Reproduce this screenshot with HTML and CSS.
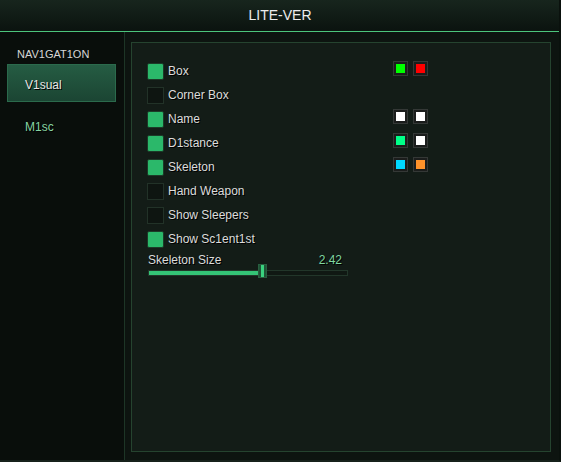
FILE: index.html
```html
<!DOCTYPE html>
<html>
<head>
<meta charset="utf-8">
<link rel="stylesheet" href="styles.css">
</head>
<body>
<div class="window">
  <div class="titlebar">LITE-VER</div>
  <div class="body">
    <aside class="sidebar">
      <div class="nav-title">NAV1GAT1ON</div>
      <div class="nav-item active">V1sual</div>
      <div class="nav-item">M1sc</div>
    </aside>
    <main class="main">
      <section class="panel">
        <div class="row">
          <span class="check on"></span><span class="label">Box</span>
          <span class="swatch"><i style="background:#00ff00"></i></span>
          <span class="swatch"><i style="background:#ff0000"></i></span>
        </div>
        <div class="row">
          <span class="check"></span><span class="label">Corner Box</span>
        </div>
        <div class="row">
          <span class="check on"></span><span class="label">Name</span>
          <span class="swatch"><i style="background:#ffffff"></i></span>
          <span class="swatch"><i style="background:#ffffff"></i></span>
        </div>
        <div class="row">
          <span class="check on"></span><span class="label">D1stance</span>
          <span class="swatch"><i style="background:#00ff88"></i></span>
          <span class="swatch"><i style="background:#ffffff"></i></span>
        </div>
        <div class="row">
          <span class="check on"></span><span class="label">Skeleton</span>
          <span class="swatch"><i style="background:#00d8ff"></i></span>
          <span class="swatch"><i style="background:#ff922a"></i></span>
        </div>
        <div class="row">
          <span class="check"></span><span class="label">Hand Weapon</span>
        </div>
        <div class="row">
          <span class="check"></span><span class="label">Show Sleepers</span>
        </div>
        <div class="row">
          <span class="check on"></span><span class="label">Show Sc1ent1st</span>
        </div>
        <div class="slider">
          <div class="slider-head"><span>Skeleton Size</span><span class="value">2.42</span></div>
          <div class="track">
            <div class="fill" style="width:112px"></div>
            <div class="handle" style="left:109px"></div>
          </div>
        </div>
      </section>
    </main>
  </div>
</div>
</body>
</html>
```

FILE: styles.css
```css
* { box-sizing: border-box; }
html, body { margin: 0; padding: 0; }
body {
  width: 561px;
  height: 462px;
  background: #0a0f0c;
  font-family: "Liberation Sans", Arial, sans-serif;
  overflow: hidden;
}
.window {
  width: 561px;
  height: 462px;
  display: flex;
  flex-direction: column;
  border-right: 2px solid #0a110d;
  border-bottom: 2px solid #16211b;
}
.titlebar {
  height: 32px;
  flex: none;
  background: linear-gradient(#17251d, #0b130f);
  border-bottom: 1px solid #4cc47c;
  color: #ececec;
  font-size: 14px;
  line-height: 31px;
  text-align: center;
  padding-left: 1px;
}
.body {
  flex: 1;
  display: flex;
  min-height: 0;
}
.sidebar {
  width: 125px;
  flex: none;
  background: #090e0b;
  border-right: 1px solid #1d3526;
  padding: 15px 8px 0 7px;
}
.nav-title {
  color: #d6d6d6;
  font-size: 11px;
  line-height: 14px;
  padding-left: 10px;
  margin-bottom: 3px;
}
.nav-item {
  height: 38px;
  line-height: 38px;
  padding-left: 18px;
  font-size: 12px;
  color: #86d4a2;
  text-shadow: 1px 1px 0 #000;
  margin-bottom: 6px;
}
.nav-item.active {
  background: linear-gradient(#255c43, #1b4533);
  border: 1px solid #2b6a4c;
  color: #e6e6e6;
  line-height: 36px;
  padding-top: 2px;
  padding-left: 17px;
}
.main {
  flex: 1;
  background: #0d1410;
  padding: 10px 8px 8px 6px;
  display: flex;
}
.panel {
  flex: 1;
  background: #131c17;
  border: 1px solid #25432f;
  padding: 16px 0 0 15px;
}
.row {
  height: 24px;
  display: flex;
  align-items: center;
}
.check {
  width: 17px;
  height: 17px;
  flex: none;
  border: 1px solid #223228;
  background: #0e1511;
  margin-right: 4px;
  margin-top: 0;
}
.check.on {
  background: #2bb86a;
  border-color: #1c3a28;
  border-radius: 2px;
}
.label {
  width: 225px;
  font-size: 12px;
  color: #dcdcdc;
  text-shadow: 1px 1px 0 #000;
}
.swatch {
  width: 15px;
  height: 15px;
  flex: none;
  background: #1b1d1c;
  border: 1px solid #343836;
  padding: 2px;
  margin-right: 5px;
  margin-top: -5px;
  display: flex;
}
.swatch i {
  flex: 1;
}
.slider {
  width: 201px;
  padding-left: 1px;
}
.slider-head {
  display: flex;
  justify-content: space-between;
  font-size: 12px;
  color: #dcdcdc;
  line-height: 14px;
  padding-top: 2px;
  padding-right: 6px;
  text-shadow: 1px 1px 0 #000;
}
.value {
  color: #7fd6a0;
}
.track {
  position: relative;
  margin-top: 3px;
  height: 6px;
  border: 1px solid #22362a;
  background: #101813;
}
.fill {
  height: 4px;
  background: #34c476;
}
.handle {
  position: absolute;
  top: -7px;
  width: 9px;
  height: 14px;
  background: #1f5236;
  border: 1px solid #285f40;
  padding: 0 1px;
}
.handle::after {
  content: "";
  display: block;
  height: 12px;
  margin: 0 1px;
  background: #3ad27f;
}
```
